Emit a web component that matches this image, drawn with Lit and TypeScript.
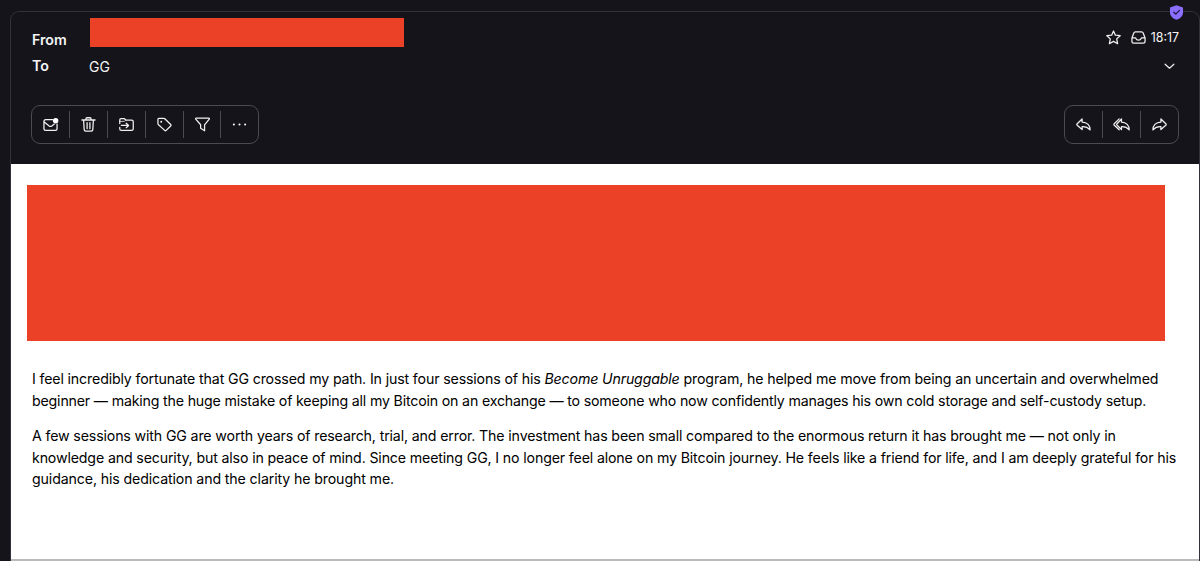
import { LitElement, html, css } from "lit";
import { customElement } from "lit/decorators.js";

const icons = {
  unread: html`<svg viewBox="0 0 16 16"><path d="M10.300 2.800H3A2 2 0 0 0 1 4.800V12.200A2 2 0 0 0 3 14.200H13A2 2 0 0 0 15 12.200V7.500M1.300 5.300L6.600 9.500Q8 10.500 9.400 9.500L12 7.500"/><circle cx="13.500" cy="4" r="2.900" class="fill"/></svg>`,
  trash: html`<svg viewBox="0 0 16 16"><path d="M1 3.200H15M5.300 3V1.800Q5.300 .8 6.300 .8H9.700Q10.700 .8 10.700 1.800V3M2.800 3.500L3.400 13.500Q3.500 15 5 15H11Q12.500 15 12.600 13.500L13.200 3.500M6.500 6V12.500M9.500 6V12.500"/></svg>`,
  move: html`<svg viewBox="0 0 16 16"><path d="M.8 7V3.200Q.8 1.700 2.300 1.700H5.500L7.300 3.300H13.500Q15.200 3.300 15.200 5V12.600Q15.200 14.300 13.500 14.300H2.500Q.8 14.300 .8 12.600V11M2.500 9H10M7.700 6.600L10.200 9L7.700 11.400"/><path class="thin" d="M1 4.700H5.500L7.300 3.300"/></svg>`,
  tag: html`<svg viewBox="0 0 16 16"><path d="M1 2.500Q1 1.500 2 1.500H7.200Q8 1.500 8.600 2.100L14.600 8Q15.400 8.800 14.600 9.600L9.800 14.300Q9 15.100 8.200 14.300L1.600 8.300Q1 7.700 1 7Z"/><circle cx="4.500" cy="5" r="1" class="fill"/></svg>`,
  filter: html`<svg viewBox="0 0 16 16"><path d="M1.300 1.300H14.700Q15.800 1.300 15.200 2.300L10.200 8.300V14.700L6 12V8.300L.8 2.300Q.2 1.300 1.300 1.300Z"/></svg>`,
  more: html`<svg viewBox="0 0 16 16"><g class="fill"><circle cx="2" cy="8" r="1.100"/><circle cx="8" cy="8" r="1.100"/><circle cx="14" cy="8" r="1.100"/></g></svg>`,
  reply: html`<svg viewBox="0 0 16 16"><path d="M6.500 2.100L1 7.500Q.6 8 1 8.500L6.500 13.400V10.400C10 10.200 12.500 11 15 13.800C15.200 9 12 5.600 6.500 5.400Z"/></svg>`,
  replyAll: html`<svg viewBox="0 0 18 16"><path d="M9 2.100L4 7.500Q3.600 8 4 8.500L9 13.400V10.400C12.500 10.200 14.800 11 17.200 13.800C17.400 9 14 5.600 9 5.400ZM6.500 2L1 7.500Q.6 8 1 8.500L6.500 13.600"/></svg>`,
  forward: html`<svg viewBox="0 0 16 16"><path d="M9.500 2.100L15 7.500Q15.400 8 15 8.500L9.500 13.400V10.400C6 10.200 3.500 11 1 13.800C.8 9 4 5.600 9.500 5.400Z"/></svg>`,
  star: html`<svg viewBox="0 0 16 16"><path d="M8 1.100L10 5.500L15.100 6.100L11.400 9.500L12.400 14.600L8 12.100L3.600 14.600L4.600 9.500L.9 6.100L6 5.500Z"/></svg>`,
  inbox: html`<svg viewBox="0 0 16 16"><path d="M1 8.500L3 3.200Q3.500 2 4.700 2H11.300Q12.500 2 13 3.200L15 8.500V12Q15 14 13 14H3Q1 14 1 12ZM1 8.500H4.500Q5 8.500 5.200 9Q5.800 10.700 8 10.700Q10.200 10.700 10.800 9Q11 8.500 11.500 8.500H15"/></svg>`,
  chevron: html`<svg viewBox="0 0 12 8"><path d="M1 1.400L6 6L11 1.400"/></svg>`,
  shield: html`<svg viewBox="0 0 14 15"><path class="badge" d="M7 .2L13.500 2.400V7.500C13.500 11.200 10.600 13.500 7 14.800C3.400 13.500.5 11.200 .5 7.500V2.400Z"/><path class="tick" d="M4.300 7.300L6.300 9.100L9.900 5.400"/></svg>`,
};

@customElement("app-root")
export class AppRoot extends LitElement {
  static styles = css`
    :host { display: block; width: 1200px; height: 561px; overflow: hidden; background: #15141a; color: #f4f4f5; font-family: Inter, sans-serif; }
    * { box-sizing: border-box; }
    svg { display: block; width: 100%; height: 100%; fill: none; stroke: #f0f0f0; stroke-width: 1.35; stroke-linejoin: round; stroke-linecap: round; overflow: visible; }
    .fill { fill: #fff; stroke: none; }
    .thin { stroke-width: 0.8; }
    .badge { fill: #8a6eff; stroke: none; }
    .tick { stroke: #211a42; }
    .page { height: 561px; padding: 11px 0 0 10px; }
    .card { position: relative; height: 550px; border: 1px solid #33313c; border-bottom: 0; border-radius: 9px 9px 0 0; display: flex; flex-direction: column; }
    .shield { position: absolute; left: 1158px; top: -7px; width: 15px; height: 15px; }
    .head { height: 152px; flex: none; padding: 6px 20px 0 21px; }
    .row { display: flex; height: 29px; }
    .label { width: 58px; font-size: 14.2px; font-weight: 600; line-height: 43px; }
    .sender { width: 314px; height: 29px; background: #eb4127; }
    .meta { margin-left: auto; display: flex; align-items: center; height: 39px; font-size: 12.4px; }
    .star, .inbox { width: 15px; height: 15px; }
    .inbox { margin: 0 5px 0 10px; }
    .to { height: 26px; margin-top: 5px; align-items: center; }
    .to .label { line-height: 26px; padding-top: 2px; }
    .name { font-size: 14px; margin-left: -1px; padding-top: 2px; }
    .chev { width: 11px; height: 7px; margin: 3px 4px 0 auto; }
    .tools { display: flex; justify-content: space-between; margin: 27px 0 0 -1px; }
    .group { display: flex; height: 39px; border: 1px solid #4b4953; border-radius: 9px; padding: 5px 0; }
    .btn { width: 37.8px; display: grid; place-items: center; border-left: 1px solid #4b4953; }
    .btn:first-child { border-left: 0; width: 37.3px; }
    .glyph { width: 15px; height: 15px; }
    .wide { width: 17px; }
    .body { flex: 1; background: #fff; color: #000; padding: 21px 0 0 16px; border-bottom: 2px solid #bbb; }
    .block { width: 1138px; height: 156px; background: #eb4127; }
    .text { padding: 27px 0 0 5px; font-size: 14.2px; line-height: 21.5px; white-space: nowrap; }
    p { margin: 0 0 14px; }
    .line { display: block; width: max-content; }
    .l1 { letter-spacing: -0.148px; }
    .l2 { letter-spacing: -0.18px; }
    .l3 { letter-spacing: -0.148px; }
    .l4 { letter-spacing: -0.151px; }
    .l5 { letter-spacing: -0.13px; }
  `;

  private group(names: (keyof typeof icons)[]) {
    return html`<div class="group">${names.map((n) => html`<div class="btn"><div class="glyph ${n === "replyAll" ? "wide" : ""}">${icons[n]}</div></div>`)}</div>`;
  }

  render() {
    return html`<div class="page"><article class="card">
      <div class="shield">${icons.shield}</div>
      <header class="head">
        <div class="row"><span class="label">From</span><div class="sender"></div>
          <div class="meta"><div class="star">${icons.star}</div><div class="inbox">${icons.inbox}</div><span>18:17</span></div></div>
        <div class="row to"><span class="label">To</span><span class="name">GG</span><div class="chev">${icons.chevron}</div></div>
        <div class="tools">${this.group(["unread", "trash", "move", "tag", "filter", "more"])}${this.group(["reply", "replyAll", "forward"])}</div>
      </header>
      <section class="body"><div class="block"></div><div class="text">
        <p><span class="line l1">I feel incredibly fortunate that GG crossed my path. In just four sessions of his <em>Become Unruggable</em> program, he helped me move from being an uncertain and overwhelmed</span>
        <span class="line l2">beginner — making the huge mistake of keeping all my Bitcoin on an exchange — to someone who now confidently manages his own cold storage and self-custody setup.</span></p>
        <p><span class="line l3">A few sessions with GG are worth years of research, trial, and error. The investment has been small compared to the enormous return it has brought me — not only in</span>
        <span class="line l4">knowledge and security, but also in peace of mind. Since meeting GG, I no longer feel alone on my Bitcoin journey. He feels like a friend for life, and I am deeply grateful for his</span>
        <span class="line l5">guidance, his dedication and the clarity he brought me.</span></p>
      </div></section>
    </article></div>`;
  }
}
